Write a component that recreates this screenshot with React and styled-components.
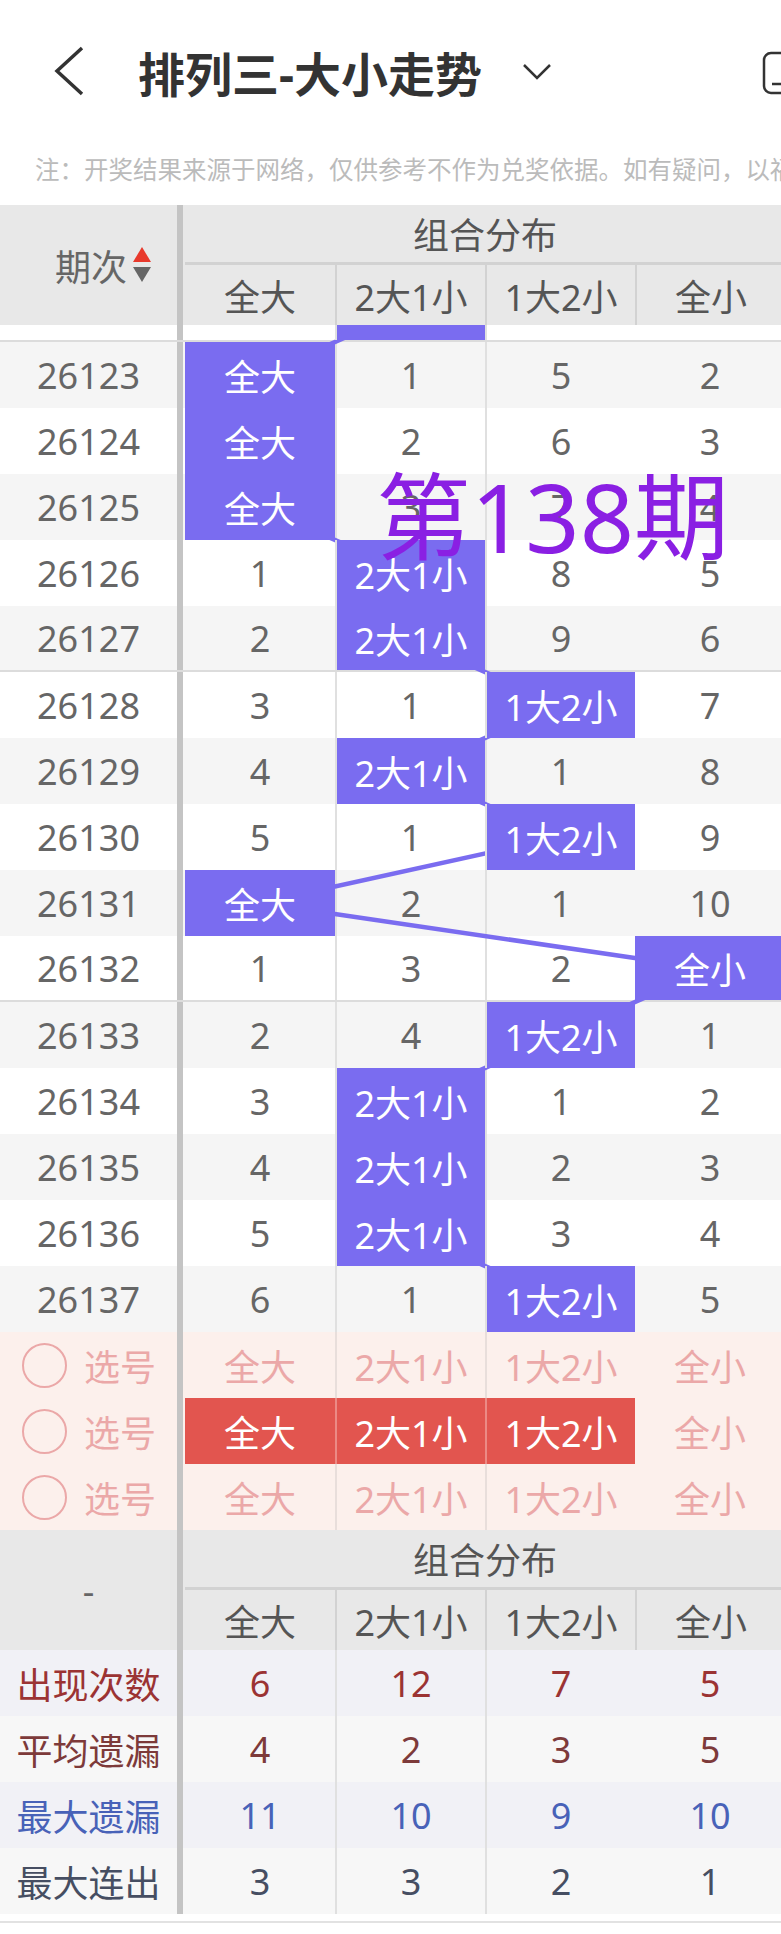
import styled, { createGlobalStyle } from "styled-components";

const GlobalStyle = createGlobalStyle`
  html, body {
    margin: 0;
    padding: 0;
    background: #fff;
  }
  body {
    width: 781px;
    overflow-x: hidden;
    font-family: "Noto Sans", "Noto Sans CJK SC", sans-serif;
  }
`;

const LABELS = ["全大", "2大1小", "1大2小", "全小"];
const HITS = [0, 0, 0, 1, 1, 2, 1, 2, 0, 3, 2, 1, 1, 1, 2];
const PURPLE = "#7a6cf0";

// omission counts, starting from where the previous issues left off
const miss = [0, 0, 4, 1];
const rows = HITS.map((h, i) => {
  const cells = LABELS.map((_, c) => {
    if (c === h) {
      miss[c] = 0;
      return null;
    }
    miss[c] += 1;
    return miss[c];
  });
  return { period: 26123 + i, hit: h, cells };
});

const stats = [
  { label: "出现次数", values: [6, 12, 7, 5], color: "#9b3333", bg: "#f1f1f6" },
  { label: "平均遗漏", values: [4, 2, 3, 5], color: "#7d3a3a", bg: "#f7f7f7" },
  { label: "最大遗漏", values: [11, 10, 9, 10], color: "#4862b8", bg: "#f1f1f6" },
  { label: "最大连出", values: [3, 3, 2, 1], color: "#464e62", bg: "#f7f7f7" },
];

const Page = styled.div`
  width: 781px;
  overflow: hidden;
`;

const TopBar = styled.div`
  height: 142px;
  display: flex;
  align-items: center;
  padding-left: 50px;
  box-sizing: border-box;
`;

const Title = styled.h1`
  margin: 0 0 0 48px;
  font-size: 47px;
  font-weight: 700;
  color: #333;
  white-space: nowrap;
`;

const Caret = styled.svg`
  margin-left: 40px;
  margin-top: 2px;
`;

const Corner = styled.svg`
  margin-left: auto;
  margin-right: -12px;
  margin-top: 4px;
`;

const Note = styled.div`
  height: 63px;
  line-height: 56px;
  padding-left: 35px;
  font-size: 24.5px;
  color: #bbb;
  white-space: nowrap;
  overflow: hidden;
`;

const HeadGrid = styled.div`
  display: grid;
  grid-template-columns: 177px 8px 600px;
  grid-template-rows: 60px 60px;
  width: 785px;
  background: #e8e8e8;
  color: #555;
  font-size: 36px;
`;

const HeadLeft = styled.div`
  grid-row: 1 / 3;
  display: flex;
  align-items: center;
  justify-content: ${(p) => (p.$start ? "flex-start" : "center")};
  padding-left: ${(p) => (p.$start ? "55px" : "0")};
  color: #666;
`;

const Divider = styled.div`
  grid-row: ${(p) => (p.$span ? "1 / 3" : "auto")};
  background: linear-gradient(to right, #c4c4c4 0 6px, transparent 6px);
`;

const GroupTitle = styled.div`
  display: flex;
  align-items: center;
  justify-content: center;
  border-bottom: 3px solid #d2d2d2;
`;

const SubRow = styled.div`
  display: grid;
  grid-template-columns: repeat(4, 150px);
`;

const SubCell = styled.div`
  display: flex;
  align-items: center;
  justify-content: center;
  border-left: ${(p) => (p.$first ? "none" : "2px solid #d2d2d2")};
`;

const SortArrows = styled.svg`
  margin-left: 6px;
`;

const Body = styled.div`
  position: relative;
  width: 785px;
  overflow: hidden;
`;

const Row = styled.div`
  display: grid;
  grid-template-columns: 177px 8px repeat(4, 150px);
  height: ${(p) => p.$h || 66}px;
  box-sizing: border-box;
  background: ${(p) => p.$bg};
  border-bottom: ${(p) => (p.$sep ? "2px solid #dcdcdc" : "none")};
  font-size: 36px;
  color: #666;
`;

const Period = styled.div`
  display: flex;
  align-items: center;
  justify-content: center;
  color: ${(p) => p.$color || "#666"};
`;

const Cell = styled.div`
  display: flex;
  align-items: center;
  justify-content: center;
  white-space: nowrap;
  border-left: ${(p) => (p.$lined ? `2px solid ${p.$line || "#e0e0e0"}` : "none")};
  background: ${(p) => p.$fill || "transparent"};
  color: ${(p) => p.$color || "inherit"};
  position: ${(p) => (p.$fill ? "relative" : "static")};
  z-index: ${(p) => (p.$fill ? 2 : "auto")};
`;

const Lines = styled.svg`
  position: absolute;
  left: 0;
  top: 0;
  z-index: 1;
  pointer-events: none;
`;

const IssueMark = styled.span`
  position: absolute;
  left: 376px;
  top: 144px;
  z-index: 3;
  font-size: 95px;
  line-height: 1;
  color: #8a1fe3;
  white-space: nowrap;
`;

const PickLabel = styled.div`
  display: flex;
  align-items: center;
  padding-left: 22px;
  gap: 17px;
  color: #eba8a8;
`;

const Ring = styled.span`
  width: 41px;
  height: 41px;
  border: 2px solid #eba8a8;
  border-radius: 50%;
`;

const BottomRule = styled.div`
  margin-top: 7px;
  height: 2px;
  background: #e2e2e2;
  margin-bottom: 11px;
`;

const cx = (c) => 185 + 150 * c + 75;
const cy = (i) => 17 + 66 * i + 33;

function Header({ first }) {
  return (
    <HeadGrid>
      {first ? (
        <HeadLeft $start>
          期次
          <SortArrows width="18" height="36" viewBox="0 0 18 36">
            <polygon points="9,0 18,15 0,15" fill="#e8392c" />
            <polygon points="0,20 18,20 9,35" fill="#666" />
          </SortArrows>
        </HeadLeft>
      ) : (
        <HeadLeft>-</HeadLeft>
      )}
      <Divider $span />
      <GroupTitle>组合分布</GroupTitle>
      <SubRow>
        {LABELS.map((l, i) => (
          <SubCell key={l} $first={i === 0}>
            {l}
          </SubCell>
        ))}
      </SubRow>
    </HeadGrid>
  );
}

export default function App() {
  const points = [`${cx(1)},-16`, ...rows.map((r, i) => `${cx(r.hit)},${cy(i)}`)].join(" ");

  return (
    <Page>
      <GlobalStyle />
      <TopBar>
        <svg width="40" height="50" viewBox="0 0 40 50">
          <polyline points="32,2 7,25 32,48" fill="none" stroke="#333" strokeWidth="3.5" />
        </svg>
        <Title>排列三-大小走势</Title>
        <Caret width="30" height="18" viewBox="0 0 30 18">
          <polyline points="2,2 15,15 28,2" fill="none" stroke="#333" strokeWidth="2.5" />
        </Caret>
        <Corner width="31" height="44" viewBox="0 0 31 44">
          <rect x="2" y="2" width="40" height="40" rx="7" fill="none" stroke="#333" strokeWidth="2.5" />
          <line x1="10" y1="33" x2="31" y2="33" stroke="#333" strokeWidth="2.5" />
        </Corner>
      </TopBar>
      <Note>注：开奖结果来源于网络，仅供参考不作为兑奖依据。如有疑问，以福彩中心公告为准。</Note>

      <Header first />

      <Body>
        <Lines width="785" height="1008" viewBox="0 0 785 1008">
          <polyline points={points} fill="none" stroke={PURPLE} strokeWidth="4.5" />
        </Lines>
        <Row $h={17} $bg="#fff" $sep>
          <Period />
          <Divider />
          <Cell />
          <Cell $lined $fill={PURPLE} />
          <Cell $lined />
          <Cell />
        </Row>
        {rows.map((r, i) => (
          <Row key={r.period} $bg={i % 2 === 0 ? "#f5f5f5" : "#fff"} $sep={i === 4 || i === 9}>
            <Period>{r.period}</Period>
            <Divider />
            {r.cells.map((v, c) => (
              <Cell
                key={c}
                $lined={c === 1 || c === 2}
                $fill={v === null ? PURPLE : null}
                $color={v === null ? "#fff" : null}
              >
                {v === null ? LABELS[c] : v}
              </Cell>
            ))}
          </Row>
        ))}
        <IssueMark>第138期</IssueMark>
      </Body>

      {[false, true, false].map((picked, k) => (
        <Row key={k} $bg="#fcf0ec">
          <PickLabel>
            <Ring />
            选号
          </PickLabel>
          <Divider />
          {LABELS.map((l, c) => {
            const on = picked && c < 3;
            return (
              <Cell
                key={l}
                $lined={c === 1 || c === 2}
                $line={on ? "#ec8a85" : "#e8dedb"}
                $fill={on ? "#e2554f" : null}
                $color={on ? "#fff" : "#eba8a8"}
              >
                {l}
              </Cell>
            );
          })}
        </Row>
      ))}

      <Header />

      {stats.map((s) => (
        <Row key={s.label} $bg={s.bg}>
          <Period $color={s.color}>{s.label}</Period>
          <Divider />
          {s.values.map((v, c) => (
            <Cell key={c} $lined={c === 1 || c === 2} $color={s.color}>
              {v}
            </Cell>
          ))}
        </Row>
      ))}
      <BottomRule />
    </Page>
  );
}
